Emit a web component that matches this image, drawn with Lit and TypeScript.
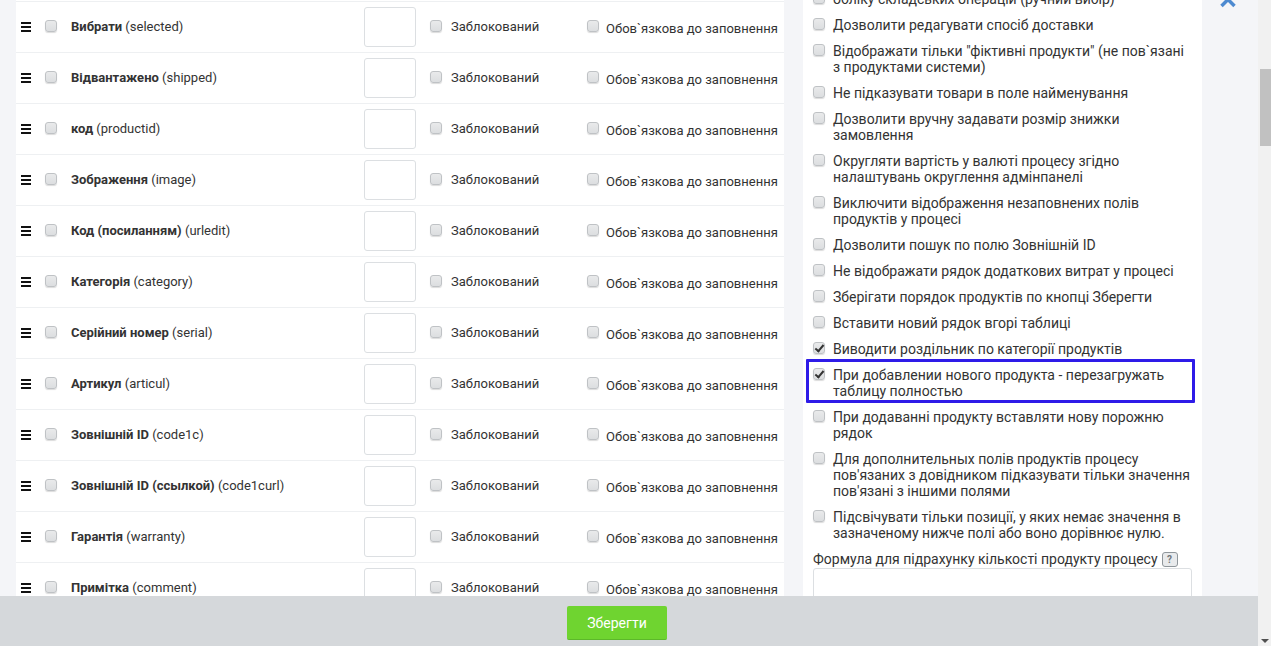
import { LitElement, html, css } from "lit";
import { customElement } from "lit/decorators.js";

const rows: [string, string][] = [
  ["Вибрати", "selected"],
  ["Відвантажено", "shipped"],
  ["код", "productid"],
  ["Зображення", "image"],
  ["Код (посиланням)", "urledit"],
  ["Категорія", "category"],
  ["Серійний номер", "serial"],
  ["Артикул", "articul"],
  ["Зовнішній ID", "code1c"],
  ["Зовнішній ID (ссылкой)", "code1curl"],
  ["Гарантія", "warranty"],
  ["Примітка", "comment"],
];

const options: { t: string; c?: boolean; hl?: boolean }[] = [
  { t: "обліку складських операцій (ручний вибір)" },
  { t: "Дозволити редагувати спосіб доставки" },
  { t: 'Відображати тільки "фіктивні продукти" (не пов`язані з продуктами системи)' },
  { t: "Не підказувати товари в поле найменування" },
  { t: "Дозволити вручну задавати розмір знижки замовлення" },
  { t: "Округляти вартість у валюті процесу згідно налаштувань округлення адмінпанелі" },
  { t: "Виключити відображення незаповнених полів продуктів у процесі" },
  { t: "Дозволити пошук по полю Зовнішній ID" },
  { t: "Не відображати рядок додаткових витрат у процесі" },
  { t: "Зберігати порядок продуктів по кнопці Зберегти" },
  { t: "Вставити новий рядок вгорі таблиці" },
  { t: "Виводити роздільник по категорії продуктів", c: true },
  { t: "При добавлении нового продукта - перезагружать таблицу полностью", c: true, hl: true },
  { t: "При додаванні продукту вставляти нову порожню рядок" },
  { t: "Для дополнительных полів продуктів процесу пов'язаних з довідником підказувати тільки значення пов'язані з іншими полями" },
  { t: "Підсвічувати тільки позиції, у яких немає значення в зазначеному нижче полі або воно дорівнює нулю." },
];

@customElement("app-root")
export class AppRoot extends LitElement {
  static styles = css`
    :host {
      display: grid;
      grid-template-columns: 1fr 13px;
      width: 100%;
      height: 646px;
      overflow: hidden;
      font-family: Roboto, "Liberation Sans", sans-serif;
      font-size: 14px;
      color: #333;
      background: #f4f5f8;
    }
    .page {
      display: grid;
      grid-template-rows: 596px 50px;
      min-width: 0;
    }
    .main {
      display: flex;
      overflow: hidden;
      padding-left: 16px;
      align-items: flex-start;
    }
    .table {
      width: 768px;
      flex: none;
      background: #fff;
      padding-top: 1px;
    }
    .row {
      display: flex;
      align-items: center;
      height: 50px;
      border-top: 1px solid #eef0f2;
    }
    .grip {
      width: 10px;
      height: 10px;
      margin-left: 5px;
      flex: none;
      display: flex;
      flex-direction: column;
      justify-content: space-between;
    }
    .grip i {
      display: block;
      height: 2px;
      background: #111;
    }
    .box {
      display: block;
      flex: none;
      width: 10px;
      height: 10px;
      border: 1px solid #bfc2c5;
      border-radius: 3px;
      background: linear-gradient(#e9eaeb, #dcdee0);
      box-shadow: 0 1px 1px rgba(0, 0, 0, 0.14);
      position: relative;
    }
    .box.on::after {
      content: "";
      position: absolute;
      left: 3px;
      top: -0.5px;
      width: 3px;
      height: 7px;
      border: solid #333;
      border-width: 0 2px 2px 0;
      transform: rotate(40deg);
    }
    .row > .box { margin-left: 14px; margin-top: -2px; }
    .name {
      width: 293px;
      margin-left: 14px;
      margin-top: -2px;
      flex: none;
      font-size: 13px;
      color: #333;
      white-space: nowrap;
    }
    .name b { font-weight: 700; }
    .num {
      width: 50px;
      height: 38px;
      flex: none;
      border: 1px solid #dcdfe2;
      border-radius: 3px;
      background: #fff;
    }
    .lock {
      display: flex;
      align-items: center;
      width: 157px;
      margin-left: 14px;
      flex: none;
      font-size: 13px;
      white-space: nowrap;
      margin-top: -2px;
    }
    .lock .box { margin-right: 9px; }
    .req {
      display: flex;
      align-items: center;
      flex: none;
      font-size: 13px;
      white-space: nowrap;
      margin-top: -2px;
    }
    .req .box { margin-right: 7px; }
    .req span:last-child { position: relative; top: 2px; }

    .side {
      width: 399px;
      flex: none;
      margin-left: 19px;
      background: #fff;
      box-sizing: border-box;
      padding: 0 10px;
      margin-top: -9px;
    }
    .opt {
      display: flex;
      align-items: flex-start;
      font-size: 14px;
      line-height: 16px;
      color: #333;
      margin-bottom: 10px;
      position: relative;
    }
    .opt .box { margin-top: 1px; margin-right: 8px; }
    .opt.hl::before {
      content: "";
      position: absolute;
      inset: -8px -3px -4px -7px;
      border: 3px solid #2e1be8;
      border-radius: 1px;
    }
    .formula {
      font-size: 14px;
      line-height: 16px;
      display: flex;
      align-items: center;
      gap: 4px;
      white-space: nowrap;
    }
    .help {
      width: 16px;
      height: 15px;
      box-sizing: border-box;
      border: 1px solid #8f969b;
      border-radius: 3px;
      background: #e8eaec;
      color: #70767b;
      font-size: 10px;
      font-weight: 700;
      line-height: 13px;
      text-align: center;
    }
    .area {
      height: 60px;
      margin-top: 1px;
      border: 1px solid #dcdfe2;
      border-radius: 3px;
      background: #fff;
    }
    .close {
      width: 16px;
      height: 8px;
      flex: none;
      margin-left: 18px;
    }
    .foot {
      background: #d5d8db;
      display: flex;
      justify-content: center;
      align-items: center;
    }
    .save {
      width: 100px;
      height: 34px;
      border: none;
      border-bottom: 1px solid #5cb82a;
      border-radius: 2px;
      background: #6fd430;
      color: #fff;
      font: 14px Roboto, "Liberation Sans", sans-serif;
      padding: 0;
      margin-top: 4px;
      margin-right: 24px;
    }
    .bar {
      background: #f1f1f1;
      position: relative;
    }
    .thumb {
      position: absolute;
      top: 69px;
      left: 2px;
      width: 11px;
      height: 77px;
      background: #c1c1c1;
    }
    .down {
      position: absolute;
      bottom: 3px;
      left: 3px;
      width: 0;
      height: 0;
      border: 4px solid transparent;
      border-top: 4px solid #505050;
      border-bottom: 0;
    }
  `;

  render() {
    return html`
      <div class="page">
        <div class="main">
          <div class="table">
            ${rows.map(
              ([a, b]) => html`<div class="row">
                <div class="grip"><i></i><i></i><i></i></div>
                <span class="box"></span>
                <div class="name"><b>${a}</b> (${b})</div>
                <div class="num"></div>
                <div class="lock"><span class="box"></span>Заблокований</div>
                <div class="req"><span class="box"></span><span>Обов\`язкова до заповнення</span></div>
              </div>`
            )}
          </div>
          <div class="side">
            ${options.map(
              (o) => html`<div class="opt ${o.hl ? "hl" : ""}">
                <span class="box ${o.c ? "on" : ""}"></span><span>${o.t}</span>
              </div>`
            )}
            <div class="formula">Формула для підрахунку кількості продукту процесу <span class="help">?</span></div>
            <div class="area"></div>
          </div>
          <svg class="close" viewBox="0 0 16 8">
            <path d="M1.5 6 L8 -0.5 L14.5 6" fill="none" stroke="#4d8ad0" stroke-width="3.5" />
          </svg>
        </div>
        <div class="foot"><button class="save">Зберегти</button></div>
      </div>
      <div class="bar"><div class="thumb"></div><div class="down"></div></div>
    `;
  }
}
